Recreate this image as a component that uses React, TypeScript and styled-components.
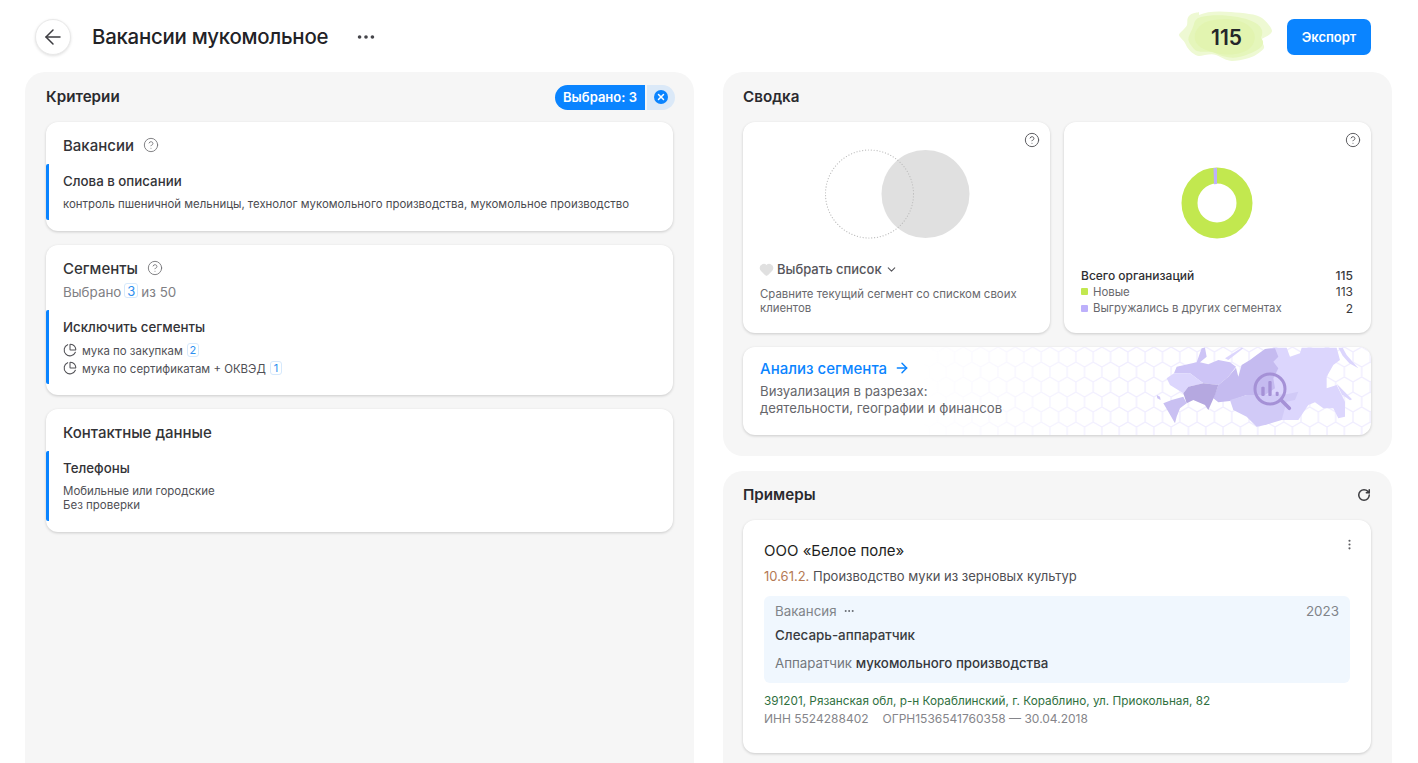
import React from "react";
import styled, { createGlobalStyle } from "styled-components";
import {
  ArrowLeft,
  ArrowRight,
  ChartPie,
  ChevronDown,
  CircleHelp,
  Ellipsis,
  EllipsisVertical,
  Heart,
  RotateCw,
  X,
} from "lucide-react";

const Global = createGlobalStyle`
  html, body { margin: 0; padding: 0; background: #fff; height: 763px; overflow: hidden; }
  body { font-family: "Inter", "Noto Sans", "Liberation Sans", sans-serif; color: #2b2b2e; }
  * { box-sizing: border-box; }
`;

const Page = styled.div`
  width: 1418px;
  height: 763px;
  overflow: hidden;
  display: flex;
  flex-direction: column;
`;

const Header = styled.header`
  height: 72px;
  flex: none;
  display: flex;
  align-items: center;
  padding: 2px 47px 0 35px;
`;

const BackButton = styled.button`
  width: 36px;
  height: 36px;
  border-radius: 50%;
  border: 1px solid #e9e9e9;
  background: #fff;
  box-shadow: 0 1px 3px rgba(0, 0, 0, 0.12);
  display: flex;
  align-items: center;
  justify-content: center;
  padding: 0;
  color: #3c3c40;
`;

const PageTitle = styled.h1`
  margin: -1px 0 0 21px;
  font-size: 20.4px;
  line-height: 28px;
  font-weight: 500;
  letter-spacing: -0.25px;
  color: #222226;
`;

const TitleMenu = styled.span`
  display: flex;
  margin: 0 0 0 27px;
  color: #45454a;
`;

const Spacer = styled.div`
  flex: 1;
`;

const Counter = styled.div`
  position: relative;
  width: 93px;
  height: 50px;
  margin-top: -2px;
  display: flex;
  align-items: center;
  justify-content: center;
  font-size: 21px;
  font-weight: 600;
  color: #24262a;
  margin-right: 15px;
`;

const CounterBlob = styled.svg`
  position: absolute;
  inset: 0;
  width: 100%;
  height: 100%;
`;

const CounterValue = styled.span`
  position: relative;
  top: 1px;
  left: 1px;
`;

const ExportButton = styled.button`
  width: 84px;
  height: 36px;
  border: 0;
  border-radius: 7px;
  background: #0a84ff;
  color: #fff;
  font-family: inherit;
  font-size: 13px;
  font-weight: 600;
  padding: 0;
`;

const Columns = styled.main`
  flex: 1;
  min-height: 0;
  display: grid;
  grid-template-columns: 669px 669px;
  column-gap: 29px;
  padding-left: 25px;
`;

const Column = styled.div`
  display: flex;
  flex-direction: column;
  gap: 15px;
  min-height: 0;
`;

const Panel = styled.section<{ $grow?: boolean; $left?: number }>`
  background: #f6f6f6;
  border-radius: 20px 20px ${(p) => (p.$grow ? "0 0" : "20px 20px")};
  padding: 0 21px 21px ${(p) => p.$left ?? 21}px;
  flex: ${(p) => (p.$grow ? "1" : "none")};
  min-height: 0;
`;

const PanelHead = styled.div<{ $h?: number; $pb?: number }>`
  height: ${(p) => p.$h ?? 50}px;
  padding-bottom: ${(p) => p.$pb ?? 0}px;
  display: flex;
  align-items: center;
  justify-content: space-between;
`;

const PanelTitle = styled.h2`
  margin: 0;
  font-size: 15.2px;
  line-height: 20px;
  font-weight: 600;
  color: #2a2a2e;
`;

const Badge = styled.div`
  display: flex;
  height: 25px;
  margin-right: -2px;
  gap: 2px;
`;

const BadgeLabel = styled.span`
  width: 90px;
  background: #0a84ff;
  border-radius: 13px 0 0 13px;
  color: #fff;
  font-size: 13px;
  font-weight: 600;
  display: flex;
  align-items: center;
  justify-content: center;
`;

const BadgeClear = styled.span`
  width: 28px;
  background: #dbe9f8;
  border-radius: 0 13px 13px 0;
  display: flex;
  align-items: center;
  justify-content: center;
`;

const ClearDot = styled.span`
  width: 14px;
  height: 14px;
  border-radius: 50%;
  background: #0a84ff;
  color: #fff;
  display: flex;
  align-items: center;
  justify-content: center;
`;

const CardStack = styled.div`
  display: flex;
  flex-direction: column;
  gap: 14px;
`;

const Card = styled.div`
  background: #fff;
  border-radius: 12px;
  box-shadow: 0 1px 3px rgba(0, 0, 0, 0.18);
`;

const CriteriaCard = styled(Card)<{ $h: number }>`
  height: ${(p) => p.$h}px;
  padding-top: 13px;
`;

const CriteriaHead = styled.div`
  display: flex;
  align-items: center;
  gap: 9px;
  padding-left: 17px;
  height: 20px;
`;

const CriteriaTitle = styled.h3`
  margin: 0;
  font-size: 15px;
  font-weight: 500;
  color: #333337;
`;

const HelpIcon = styled(CircleHelp)`
  color: #6f6f73;
  flex: none;
`;

const Selected = styled.div`
  padding-left: 17px;
  margin-top: 4px;
  height: 20px;
  font-size: 13.4px;
  line-height: 20px;
  color: #808084;
`;

const Tag = styled.span<{ $small?: boolean }>`
  display: inline-block;
  min-width: ${(p) => (p.$small ? 12 : 14)}px;
  height: ${(p) => (p.$small ? 14 : 15)}px;
  line-height: ${(p) => (p.$small ? 13 : 14)}px;
  text-align: center;
  border: 1px solid #d6e9fc;
  border-radius: 3px;
  color: #2d8fef;
  font-size: ${(p) => (p.$small ? 11 : 13)}px;
  margin: 0 3px 0 ${(p) => (p.$small ? 1 : 3)}px;
  vertical-align: 1px;
`;

const Criterion = styled.div<{ $top: number; $h: number }>`
  margin-top: ${(p) => p.$top}px;
  height: ${(p) => p.$h}px;
  border-left: 3px solid #0a84ff;
  border-radius: 2px;
  padding: 8px 0 0 14px;
`;

const CriterionTitle = styled.div`
  font-size: 13.3px;
  line-height: 18px;
  font-weight: 500;
  color: #333337;
`;

const Keywords = styled.div`
  margin-top: 5px;
  font-size: 11.42px;
  line-height: 18px;
  color: #4b4b50;
`;

const PlainLines = styled.div`
  margin-top: 7px;
  font-size: 11.5px;
  line-height: 14px;
  color: #505055;
`;

const SegmentList = styled.div`
  margin-top: 6px;
  display: flex;
  flex-direction: column;
  gap: 2px;
`;

const SegmentRow = styled.div`
  display: flex;
  align-items: center;
  gap: 5px;
  height: 16px;
  font-size: 11.45px;
  color: #505055;
`;

const SummaryGrid = styled.div`
  display: grid;
  grid-template-columns: 307px 307px;
  column-gap: 14px;
  row-gap: 14px;
`;

const SummaryCard = styled(Card)`
  position: relative;
  height: 211px;
  display: flex;
  flex-direction: column;
`;

const CornerHelp = styled(CircleHelp)`
  position: absolute;
  top: 10px;
  right: 10px;
  color: #5e5e62;
`;

const ChartArea = styled.div`
  height: 117px;
  flex: none;
  display: flex;
  align-items: flex-end;
  justify-content: center;
`;

const ListPicker = styled.div`
  margin-top: 21px;
  padding-left: 16px;
  display: flex;
  align-items: center;
  gap: 3px;
  height: 18px;
  font-size: 13px;
  font-weight: 500;
  color: #55555a;
`;

const PickerNote = styled.div`
  margin-top: 9px;
  padding: 0 17px;
  font-size: 11.4px;
  line-height: 14px;
  color: #68686d;
`;

const Totals = styled.div`
  margin-top: 28px;
  padding: 0 18px 0 17px;
  display: flex;
  flex-direction: column;
`;

const TotalRow = styled.div<{ $strong?: boolean }>`
  height: 16.5px;
  display: flex;
  align-items: center;
  justify-content: space-between;
  font-size: ${(p) => (p.$strong ? 12 : 11.4)}px;
  font-weight: ${(p) => (p.$strong ? 500 : 400)};
  color: ${(p) => (p.$strong ? "#2e2e32" : "#68686d")};
`;

const TotalLabel = styled.span`
  display: flex;
  align-items: center;
  gap: 5px;
`;

const TotalValue = styled.span`
  color: #38383c;
  font-size: 12px;
`;

const Swatch = styled.i<{ $color: string }>`
  width: 7px;
  height: 7px;
  background: ${(p) => p.$color};
  border-radius: 1px;
`;

const AnalysisCard = styled(Card)`
  grid-column: 1 / -1;
  height: 88px;
  position: relative;
  overflow: hidden;
  padding: 12px 17px;
`;

const MapArt = styled.svg`
  position: absolute;
  top: 0;
  right: 0;
  width: 451px;
  height: 88px;
`;

const AnalysisTitle = styled.div`
  position: relative;
  display: flex;
  align-items: center;
  gap: 7px;
  height: 18px;
  font-size: 15px;
  font-weight: 500;
  color: #0a84ff;
`;

const AnalysisText = styled.div`
  position: relative;
  margin-top: 6px;
  font-size: 13.2px;
  line-height: 17px;
  color: #66666b;
`;

const RefreshIcon = styled(RotateCw)`
  color: #3d3d41;
`;

const ExampleCard = styled(Card)`
  position: relative;
  height: 233px;
  padding: 21px 21px 0;
`;

const CardMenu = styled(EllipsisVertical)`
  position: absolute;
  top: 18px;
  right: 15px;
  color: #606064;
`;

const CompanyName = styled.div`
  font-size: 15px;
  line-height: 20px;
  color: #1e1e22;
`;

const Okved = styled.div`
  margin-top: 6px;
  font-size: 13px;
  line-height: 18px;
  color: #4f4f54;
`;

const OkvedCode = styled.span`
  color: #b57a55;
`;

const VacancyBox = styled.div`
  margin-top: 11px;
  height: 87px;
  background: #f0f7fe;
  border-radius: 6px;
  padding: 6px 11px 0 11px;
`;

const VacancyHead = styled.div`
  display: flex;
  align-items: center;
  height: 18px;
  font-size: 13.3px;
  color: #808489;
`;

const VacancyDots = styled(Ellipsis)`
  margin-left: 6px;
  color: #60646a;
`;

const VacancyYear = styled.span`
  margin-left: auto;
  font-size: 13.4px;
`;

const VacancyRole = styled.div`
  margin-top: 6px;
  font-size: 13.4px;
  line-height: 18px;
  font-weight: 500;
  color: #3a3c40;
`;

const VacancyText = styled.div`
  margin-top: 10px;
  font-size: 13.3px;
  line-height: 18px;
  color: #74787d;
`;

const Mark = styled.b`
  font-weight: 500;
  color: #36383c;
`;

const Address = styled.div`
  margin-top: 9px;
  font-size: 11.75px;
  line-height: 18px;
  color: #2f6f3e;
`;

const Registry = styled.div`
  font-size: 12px;
  line-height: 18px;
  color: #85858a;
`;

const RegistryGap = styled.span`
  margin-left: 14px;
`;

const Blob = () => (
  <CounterBlob viewBox="0 0 93 50" aria-hidden="true">
    <path
      fill="#eef9d3"
      d="M20 4C28 0 40 0 52 1s26 2 31 6 10 10 10 13-8 7-13 9c3 2 6 6 5 8s-8 8-15 10-12 3-17 3-11-4-16-6-13 1-17 1-11-6-13-11-7-8-7-10 7-7 8-10-1-7 3-10 8-2 9-3Z"
    />
    <path
      fill="#e5f6bb"
      d="M22 6C34 3 56 4 70 9s15 12 12 18c3 3 3 7-1 10s-12 7-21 9-18-1-24-4-17 1-21-4-7-8-5-13 4-8 5-12 3-6 7-7Z"
    />
    <path fill="#e2f4b0" d="M30 10C44 6 62 8 70 15s7 15 2 21-18 9-30 7-24-6-26-14 4-16 14-19Z" />
  </CounterBlob>
);

const Venn = () => (
  <svg width="150" height="90" viewBox="0 0 150 90" aria-hidden="true">
    <circle cx="103.5" cy="45" r="44" fill="#e0e0e0" />
    <circle cx="47.5" cy="45" r="44" fill="none" stroke="#bdbdbd" strokeWidth="1.2" strokeDasharray="0.1 2.8" strokeLinecap="round" />
  </svg>
);

const Donut = () => (
  <svg width="74" height="72" viewBox="0 0 74 72" aria-hidden="true">
    <circle cx="36" cy="36" r="27.5" fill="none" stroke="#c2e84f" strokeWidth="16" />
    <path d="M32.5 1.1 L36 1 L36 17 L33 17.2 Z" fill="#bdb0fb" />
  </svg>
);

const Map = () => (
  <MapArt viewBox="0 0 451 88" aria-hidden="true">
    <defs>
      <pattern id="hex" width="17.32" height="30" patternUnits="userSpaceOnUse">
        <path d="M8.66 0 17.32 5V15L8.66 20 0 15V5ZM8.66 20V30" fill="none" stroke="#f0edff" strokeWidth="1.4" />
      </pattern>
      <linearGradient id="fade" x1="0" x2="1" y1="0" y2="0">
        <stop offset="0" stopColor="#fff" stopOpacity="0" />
        <stop offset="0.45" stopColor="#fff" stopOpacity="1" />
      </linearGradient>
      <mask id="hexMask">
        <rect width="451" height="88" fill="url(#fade)" />
      </mask>
    </defs>
    <rect width="451" height="88" fill="url(#hex)" mask="url(#hexMask)" />
    <g transform="translate(230 -2) scale(.3333)">
      <path
        fill="#dcd6fd"
        d="M345 12 375 8H410L420 35 450 25 455 8H560L570 45 550 60 530 95 530 130 560 120 585 170 585 215 565 220 550 190 520 190 495 172 475 180 445 225 385 225 345 240 300 200 345 60Z"
      />
      <path fill="#dcd6fd" d="M565 8H578L590 30 625 70 598 55 578 32Z" />
      <path fill="#dcd6fd" d="M560 116 606 163 600 166 575 148Z" />
      <path fill="#cdc4f6" d="M72 85 80 65 140 52 155 10 165 8 170 35 150 52 175 58 205 45 240 52 258 65 235 95 205 120 160 115 120 85Z" />
      <path fill="#dcd6fd" d="M72 85 120 85 160 115 115 125 100 145 60 120 50 100Z" />
      <path fill="#c5bbf0" d="M205 120 235 95 258 68 265 95 275 60 300 45 320 30 345 12 375 10 385 35 370 50 385 70 370 100 375 130 345 150 290 150 240 168 205 172 190 160Z" />
      <path fill="#d1caf7" d="M240 165 290 150 345 150 410 148 445 140 435 165 410 170 395 225 345 240 320 245 290 215 250 195Z" />
      <path fill="#c9c0f2" d="M40 175 65 165 100 155 110 175 90 190 80 215 75 235 55 200Z" />
      <path fill="#b5a8e0" d="M100 145 115 125 160 115 205 120 195 150 175 195 165 180 130 165 110 175Z" />
      <path fill="#cdc4f6" d="M20 150 30 155 32 165 22 160Z" />
      <path fill="#dcd6fd" d="M225 40 275 8 280 10 235 45Z" />
      <g fill="none" stroke="#a591d6" strokeLinecap="round">
        <circle cx="360" cy="132" r="45" strokeWidth="9" />
        <path d="M394 166 418 190" strokeWidth="11" />
      </g>
      <g fill="#a591d6">
        <rect x="334" y="125" width="10" height="28" rx="3" />
        <rect x="355" y="108" width="10" height="45" rx="3" />
        <rect x="377" y="140" width="9" height="13" rx="3" />
      </g>
    </g>
  </MapArt>
);

export default function App() {
  return (
    <Page>
      <Global />
      <Header>
        <BackButton aria-label="Назад">
          <ArrowLeft size={24} strokeWidth={1.5} />
        </BackButton>
        <PageTitle>Вакансии мукомольное</PageTitle>
        <TitleMenu>
          <Ellipsis size={22} strokeWidth={2} />
        </TitleMenu>
        <Spacer />
        <Counter>
          <Blob />
          <CounterValue>115</CounterValue>
        </Counter>
        <ExportButton>Экспорт</ExportButton>
      </Header>

      <Columns>
        <Column>
          <Panel $grow>
            <PanelHead>
              <PanelTitle>Критерии</PanelTitle>
              <Badge>
                <BadgeLabel>Выбрано: 3</BadgeLabel>
                <BadgeClear>
                  <ClearDot>
                    <X size={10} strokeWidth={3.5} />
                  </ClearDot>
                </BadgeClear>
              </Badge>
            </PanelHead>
            <CardStack>
              <CriteriaCard $h={109}>
                <CriteriaHead>
                  <CriteriaTitle>Вакансии</CriteriaTitle>
                  <HelpIcon size={16} strokeWidth={1.3} />
                </CriteriaHead>
                <Criterion $top={9} $h={56}>
                  <CriterionTitle>Слова в описании</CriterionTitle>
                  <Keywords>контроль пшеничной мельницы, технолог мукомольного производства, мукомольное производство</Keywords>
                </Criterion>
              </CriteriaCard>

              <CriteriaCard $h={150}>
                <CriteriaHead>
                  <CriteriaTitle>Сегменты</CriteriaTitle>
                  <HelpIcon size={16} strokeWidth={1.3} />
                </CriteriaHead>
                <Selected>
                  Выбрано<Tag>3</Tag>из 50
                </Selected>
                <Criterion $top={8} $h={74}>
                  <CriterionTitle>Исключить сегменты</CriterionTitle>
                  <SegmentList>
                    <SegmentRow>
                      <ChartPie size={14} strokeWidth={1.8} />
                      <span>
                        мука по закупкам <Tag $small>2</Tag>
                      </span>
                    </SegmentRow>
                    <SegmentRow>
                      <ChartPie size={14} strokeWidth={1.8} />
                      <span>
                        мука по сертификатам + ОКВЭД <Tag $small>1</Tag>
                      </span>
                    </SegmentRow>
                  </SegmentList>
                </Criterion>
              </CriteriaCard>

              <CriteriaCard $h={123}>
                <CriteriaHead>
                  <CriteriaTitle>Контактные данные</CriteriaTitle>
                </CriteriaHead>
                <Criterion $top={9} $h={70}>
                  <CriterionTitle>Телефоны</CriterionTitle>
                  <PlainLines>
                    Мобильные или городские
                    <br />
                    Без проверки
                  </PlainLines>
                </Criterion>
              </CriteriaCard>
            </CardStack>
          </Panel>
        </Column>

        <Column>
          <Panel $left={20}>
            <PanelHead>
              <PanelTitle>Сводка</PanelTitle>
            </PanelHead>
            <SummaryGrid>
              <SummaryCard>
                <CornerHelp size={16} strokeWidth={1.5} />
                <ChartArea>
                  <Venn />
                </ChartArea>
                <ListPicker>
                  <Heart size={15} fill="#e0e0e0" color="#e0e0e0" />
                  Выбрать список
                  <ChevronDown size={13} strokeWidth={2} />
                </ListPicker>
                <PickerNote>Сравните текущий сегмент со списком своих клиентов</PickerNote>
              </SummaryCard>

              <SummaryCard>
                <CornerHelp size={16} strokeWidth={1.5} />
                <ChartArea>
                  <Donut />
                </ChartArea>
                <Totals>
                  <TotalRow $strong>
                    Всего организаций
                    <TotalValue>115</TotalValue>
                  </TotalRow>
                  <TotalRow>
                    <TotalLabel>
                      <Swatch $color="#c2e84f" />
                      Новые
                    </TotalLabel>
                    <TotalValue>113</TotalValue>
                  </TotalRow>
                  <TotalRow>
                    <TotalLabel>
                      <Swatch $color="#bdb0fb" />
                      Выгружались в других сегментах
                    </TotalLabel>
                    <TotalValue>2</TotalValue>
                  </TotalRow>
                </Totals>
              </SummaryCard>

              <AnalysisCard>
                <Map />
                <AnalysisTitle>
                  Анализ сегмента
                  <ArrowRight size={16} strokeWidth={2.2} />
                </AnalysisTitle>
                <AnalysisText>
                  Визуализация в разрезах:
                  <br />
                  деятельности, географии и финансов
                </AnalysisText>
              </AnalysisCard>
            </SummaryGrid>
          </Panel>

          <Panel $grow $left={20}>
            <PanelHead $h={49} $pb={2}>
              <PanelTitle>Примеры</PanelTitle>
              <RefreshIcon size={14} strokeWidth={2.6} />
            </PanelHead>
            <ExampleCard>
              <CardMenu size={13} strokeWidth={2} />
              <CompanyName>ООО «Белое поле»</CompanyName>
              <Okved>
                <OkvedCode>10.61.2.</OkvedCode> Производство муки из зерновых культур
              </Okved>
              <VacancyBox>
                <VacancyHead>
                  Вакансия
                  <VacancyDots size={12} strokeWidth={2} />
                  <VacancyYear>2023</VacancyYear>
                </VacancyHead>
                <VacancyRole>Слесарь-аппаратчик</VacancyRole>
                <VacancyText>
                  Аппаратчик <Mark>мукомольного производства</Mark>
                </VacancyText>
              </VacancyBox>
              <Address>391201, Рязанская обл, р-н Кораблинский, г. Кораблино, ул. Приокольная, 82</Address>
              <Registry>
                ИНН 5524288402
                <RegistryGap>ОГРН1536541760358 — 30.04.2018</RegistryGap>
              </Registry>
            </ExampleCard>
          </Panel>
        </Column>
      </Columns>
    </Page>
  );
}
